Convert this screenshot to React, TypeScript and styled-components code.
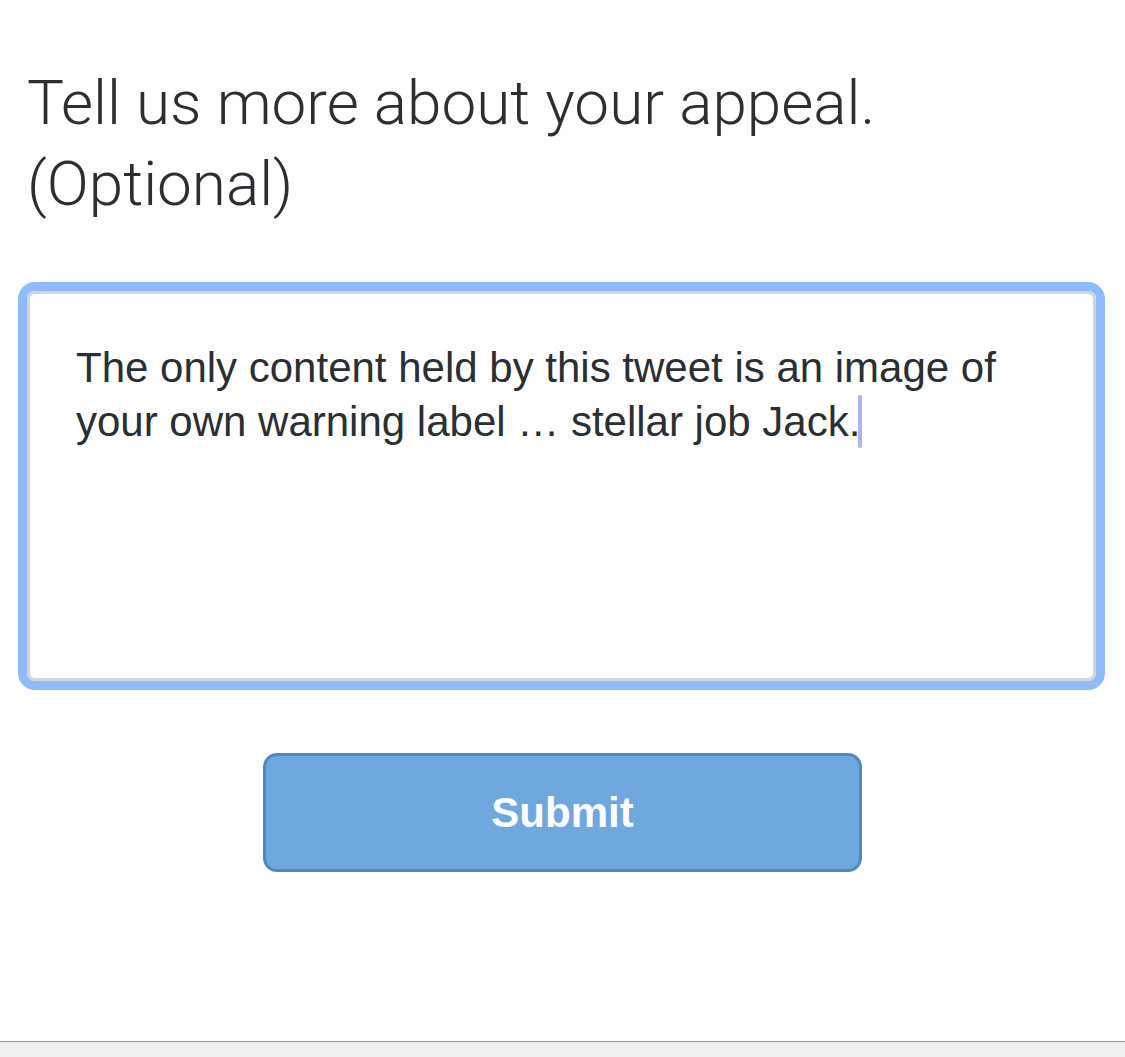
import React from "react";
import styled, { createGlobalStyle } from "styled-components";

const Global = createGlobalStyle`
  html, body { margin: 0; padding: 0; background: #ffffff; }
  body { font-family: "Liberation Sans", Arial, sans-serif; }
  * { box-sizing: border-box; }
`;

const Page = styled.div`
  min-height: 100vh;
  display: flex;
  flex-direction: column;
`;

const Main = styled.main`
  flex: 1;
  display: flex;
  flex-direction: column;
  padding: 0 20px 0 18px;
`;

const Heading = styled.h1`
  margin: 62px 0 0 9px;
  font-family: Roboto, "Liberation Sans", sans-serif;
  font-weight: 300;
  font-size: 62px;
  line-height: 81px;
  color: #2b2f33;
`;

const FocusRing = styled.div`
  margin-top: 58px;
  border: 9px solid #8ebcf8;
  border-radius: 17px;
`;

const TextBox = styled.div`
  height: 390px;
  border: 3px solid #cfd5da;
  border-radius: 8px;
  background: #ffffff;
  padding: 47px 40px 0 46px;
  font-size: 42px;
  line-height: 54px;
  color: #2a2f33;
`;

const Caret = styled.span`
  display: inline-block;
  width: 4px;
  height: 53px;
  margin-left: -2px;
  vertical-align: top;
  background: #a9b6f2;
  border-radius: 2px;
`;

const ButtonRow = styled.div`
  display: flex;
  justify-content: center;
  margin-top: 63px;
  padding-left: 2px;
`;

const SubmitButton = styled.button`
  width: 599px;
  height: 119px;
  background: #6fa8df;
  border: 3px solid #5089c2;
  border-radius: 14px;
  color: #ffffff;
  font-family: "Liberation Sans", Arial, sans-serif;
  font-weight: 700;
  font-size: 42px;
  cursor: pointer;
`;

const Footer = styled.footer`
  height: 16px;
  border-top: 1px solid #999999;
  background: #eff0f2;
`;

export default function App() {
  return (
    <Page>
      <Global />
      <Main>
        <Heading>
          Tell us more about your appeal.
          <br />
          (Optional)
        </Heading>
        <FocusRing>
          <TextBox>
            The only content held by this tweet is an image of your own warning label … stellar job Jack.
            <Caret />
          </TextBox>
        </FocusRing>
        <ButtonRow>
          <SubmitButton>Submit</SubmitButton>
        </ButtonRow>
      </Main>
      <Footer />
    </Page>
  );
}
